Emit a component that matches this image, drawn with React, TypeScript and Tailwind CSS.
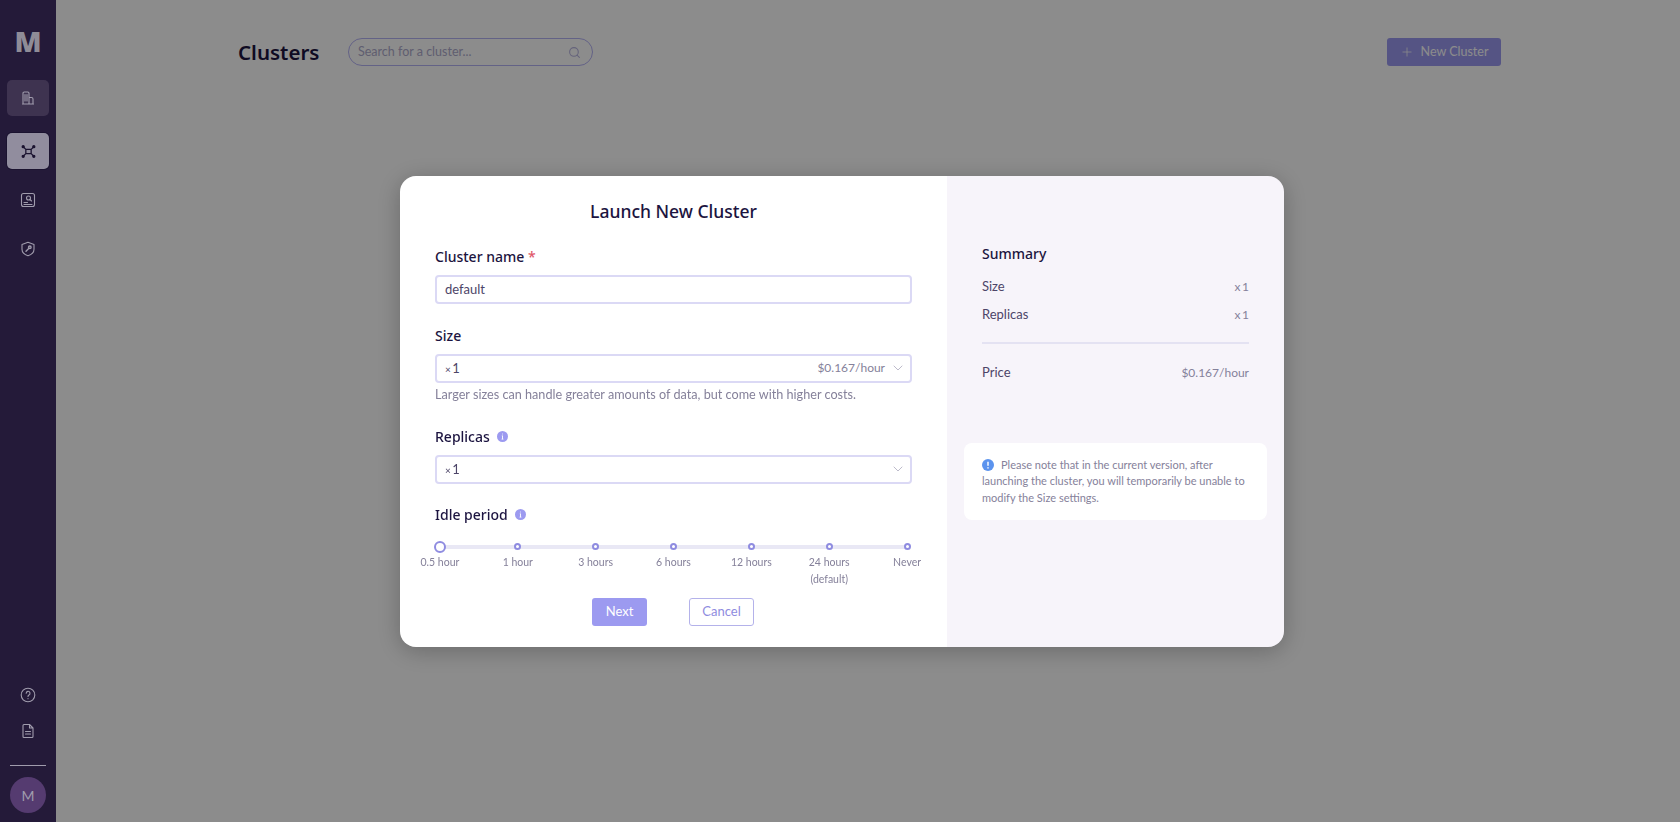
import React from 'react'
import { ChevronDown, Plus, Search } from 'lucide-react'

const font = "font-['Lato',sans-serif]"
const headingFont = "font-['Noto_Sans',sans-serif]"

const periods = [
  { label: '0.5 hour' },
  { label: '1 hour' },
  { label: '3 hours' },
  { label: '6 hours' },
  { label: '12 hours' },
  { label: '24 hours', note: '(default)' },
  { label: 'Never' },
]

const InfoDot: React.FC<{ color?: string; mark?: string; size?: number }> = ({ color = '#9c9af0', mark = 'i', size = 11 }) => (
  <svg width={size} height={size} viewBox="0 0 10 10" className="shrink-0">
    <circle cx="5" cy="5" r="5" fill={color} />
    {mark === 'i' ? (
      <path d="M5 2.400v.7M4.400 4.300H5v3M4.200 7.400h1.600" stroke="#fff" strokeWidth="0.8" fill="none" />
    ) : (
      <path d="M5 2.200v3.400M5 6.900v1" stroke="#fff" strokeWidth="1.200" fill="none" />
    )}
  </svg>
)

const SideIcon: React.FC<{ children: React.ReactNode; size?: number }> = ({ children, size = 16 }) => (
  <svg width={size} height={size} viewBox="0 0 16 16" fill="none" stroke="currentColor" strokeWidth="1.1" strokeLinecap="round" strokeLinejoin="round">
    {children}
  </svg>
)

const Sidebar = () => (
  <aside className="relative z-20 flex h-full w-[56px] shrink-0 flex-col items-center bg-[#241a39] pt-[25px] pb-[9px] text-[#a09cad]">
    <div className="h-[32px] font-['Open_Sans',sans-serif] text-[28px] leading-[32px] font-extrabold text-[#8f8c97]">M</div>
    <div className="mt-[23px] flex h-[36px] w-[42px] items-center justify-center rounded-[5px] bg-[#3e3350]">
      <SideIcon>
        <path d="M3 14V3.200C3 2.500 3.500 2 4.200 2h3.600C8.500 2 9 2.500 9 3.200V14zM2.500 14h11M9 7.500h2.500c.8 0 1.500.6 1.500 1.400V14M5 4.500V11M7 4.500V11" />
      </SideIcon>
    </div>
    <div className="mt-[17px] flex h-[36px] w-[42px] items-center justify-center rounded-[5px] bg-[#918d9e] text-[#1b1330] shadow-[0_0_0_1px_#1b1330]">
      <SideIcon size={17}>
        <path d="M5.500 6h5v4h-5zM5.500 6 3 3.500M10.500 6 13 3.500M5.500 10 3 12.500M10.500 10 13 12.500" strokeWidth="1.200" />
        <circle cx="3" cy="3.500" r="1" fill="currentColor" />
        <circle cx="13" cy="3.500" r="1" fill="currentColor" />
        <circle cx="3" cy="12.500" r="1" fill="currentColor" />
        <circle cx="13" cy="12.500" r="1" fill="currentColor" />
      </SideIcon>
    </div>
    <div className="mt-[23px] flex h-[16px] items-center justify-center">
      <SideIcon>
        <rect x="1.500" y="1.500" width="13" height="13" rx="2" />
        <circle cx="8.500" cy="6" r="2" />
        <path d="m10 7.500 1.500 1.500M4 10.500h3.500M4 12.500h8" />
      </SideIcon>
    </div>
    <div className="mt-[33px] flex h-[16px] items-center justify-center">
      <SideIcon>
        <path d="M8 1.200 14 3.500v4.700c0 3.200-2.500 5.400-6 6.600-3.500-1.200-6-3.400-6-6.600V3.500z" />
        <path d="M6 10.200 9.200 7M8.500 6.300a1.300 1.300 0 1 1 1.300 1.300" strokeWidth="1.400" />
      </SideIcon>
    </div>
    <div className="mt-auto flex h-[16px] items-center justify-center">
      <SideIcon>
        <circle cx="8" cy="8" r="6.800" />
        <path d="M6.200 6.200a1.900 1.900 0 1 1 2.800 1.700c-.7.400-1 .8-1 1.500M8 11.500v.2" />
      </SideIcon>
    </div>
    <div className="mt-[20px] flex h-[16px] items-center justify-center">
      <SideIcon>
        <path d="M3 2.500c0-.6.400-1 1-1h5.500L13 5v8.500c0 .6-.4 1-1 1H4c-.6 0-1-.4-1-1zM9.500 1.500V5H13M5.500 8.500h5M5.500 11h5" />
      </SideIcon>
    </div>
    <div className="mt-[26px] h-px w-[36px] bg-[#a09cad]" />
    <div className="mt-[11px] flex h-[36px] w-[36px] items-center justify-center rounded-full bg-[#553b70] text-[14px] text-[#a09cad]">M</div>
  </aside>
)

const Header = () => (
  <div className="flex h-[28px] items-center justify-between">
    <div className="flex items-center gap-[28px]">
      <h1 className={`${headingFont} w-[82px] text-[20.500px] leading-[28px] font-semibold text-[#1c1440]`}>Clusters</h1>
      <div className="flex h-[28px] w-[245px] items-center justify-between rounded-full border border-[#b5b2f5] pr-[11px] pl-[9px]">
        <span className="text-[12.500px] text-[#aeabcc]">Search for a cluster...</span>
        <Search size={13} className="text-[#b8b5e0]" />
      </div>
    </div>
    <button className="flex h-[28px] w-[114px] items-center justify-center gap-[7px] rounded-[3px] bg-[#9c9af0] text-[12.500px] text-white">
      <Plus size={14} strokeWidth={1.25} />
      New Cluster
    </button>
  </div>
)

const Multiplier = () => (
  <span className="[word-spacing:-2px]"><span className="text-[10px]">×</span> 1</span>
)

const Field: React.FC<{ children: React.ReactNode; right?: string }> = ({ children, right }) => (
  <div className="flex h-[29px] items-center justify-between rounded-[4px] border-2 border-[#dbd9f5] pr-[4px] pl-[8px] text-[13px] text-[#4d4568]">
    <span className="pt-[1px]">{children}</span>
    {right !== undefined && (
      <span className="flex items-center gap-[5px] text-[12px] text-[#85819a]">
        {right}
        <ChevronDown size={16} strokeWidth={1} className="text-[#9c98b0]" />
      </span>
    )}
  </div>
)

const Label: React.FC<{ children: React.ReactNode; className?: string }> = ({ children, className = '' }) => (
  <div className={`${headingFont} flex h-[20px] items-center gap-[7px] text-[14px] font-medium text-[#1c1440] ${className}`}>{children}</div>
)

const IdleSlider = () => (
  <div className="-mx-[34px] grid grid-cols-7 justify-items-center">
    {periods.map((p, i) => (
      <div key={p.label} className="flex flex-col items-center text-center text-[10.500px] leading-[17px] text-[#85819a]">
        <div className="flex h-[12px] items-center">
          {i === 0 ? (
            <span className="z-10 h-[12px] w-[12px] rounded-full border-2 border-[#8f8ce0] bg-white" />
          ) : (
            <span className="z-10 h-[7px] w-[7px] rounded-full border-2 border-[#8f8ce0] bg-white" />
          )}
        </div>
        <div className="mt-[1px]">{p.label}</div>
        {p.note && <div>{p.note}</div>}
      </div>
    ))}
  </div>
)

const LeftPanel = () => (
  <div className="w-[547px] shrink-0 bg-white px-[35px] pt-[22px]">
    <h2 className={`${headingFont} text-center text-[17.500px] leading-[26px] font-medium text-[#1c1440]`}>Launch New Cluster</h2>
    <Label className="mt-[23px]">
      <span>Cluster name <span className="text-[#e0596a]">*</span></span>
    </Label>
    <div className="mt-[8px]"><Field>default</Field></div>
    <Label className="mt-[22px]">Size</Label>
    <div className="mt-[8px]"><Field right="$0.167/hour"><Multiplier /></Field></div>
    <p className="mt-[3px] text-[12.650px] leading-[18px] text-[#85819a]">Larger sizes can handle greater amounts of data, but come with higher costs.</p>
    <Label className="mt-[23px]">Replicas <InfoDot /></Label>
    <div className="mt-[8px]"><Field right=""><Multiplier /></Field></div>
    <Label className="mt-[21px]">Idle period <InfoDot /></Label>
    <div className="relative mt-[16px]">
      <div className="absolute top-[4px] right-[5px] left-[5px] h-[4px] bg-[#e9e8f5]" />
      <IdleSlider />
    </div>
    <div className="mt-[10px] flex justify-center gap-[42px] pr-[1px]">
      <button className="h-[28px] w-[55px] rounded-[3px] bg-[#9c9af0] text-[13px] text-white">Next</button>
      <button className="h-[28px] w-[65px] rounded-[3px] border border-[#b4b2ea] bg-white text-[13px] text-[#8f8ce0]">Cancel</button>
    </div>
  </div>
)

const SummaryRow: React.FC<{ name: string; value: string }> = ({ name, value }) => (
  <div className="flex h-[18px] items-center justify-between text-[13px]">
    <span className="text-[#4d4568]">{name}</span>
    <span className="text-[12px] [word-spacing:-1.500px] text-[#85819a]">{value}</span>
  </div>
)

const RightPanel = () => (
  <div className="flex-1 bg-[#f7f4fa] px-[17px] pt-[68px]">
    <div className="px-[18px]">
      <h3 className={`${headingFont} text-[14px] leading-[20px] font-medium text-[#1c1440]`}>Summary</h3>
      <div className="mt-[14px]"><SummaryRow name="Size" value="x 1" /></div>
      <div className="mt-[10px]"><SummaryRow name="Replicas" value="x 1" /></div>
      <div className="mt-[18px] h-[2px] bg-[#e4e2f2]" />
      <div className="mt-[20px]"><SummaryRow name="Price" value="$0.167/hour" /></div>
    </div>
    <div className="mt-[61px] rounded-[8px] bg-white px-[18px] py-[14px] text-[11px] leading-[16.500px] text-[#85819a]">
      <span className="mr-[7px] inline-block align-[-2px]"><InfoDot color="#5b93ee" mark="!" size={12} /></span>
      Please note that in the current version, after<br />
      launching the cluster, you will temporarily be unable to<br />
      modify the Size settings.
    </div>
  </div>
)

export default function App() {
  return (
    <div className={`${font} flex h-[822px] w-[1680px] overflow-hidden bg-white`}>
      <Sidebar />
      <main className="flex-1 pt-[38px] pr-[179px] pl-[182px]">
        <Header />
      </main>
      <div className="fixed inset-0 z-10 flex items-center justify-center bg-black/45 pl-[4px]">
        <div className="flex h-[471px] w-[884px] overflow-hidden rounded-[16px] shadow-[0_4px_24px_rgba(0,0,0,0.25)]">
          <LeftPanel />
          <RightPanel />
        </div>
      </div>
    </div>
  )
}
